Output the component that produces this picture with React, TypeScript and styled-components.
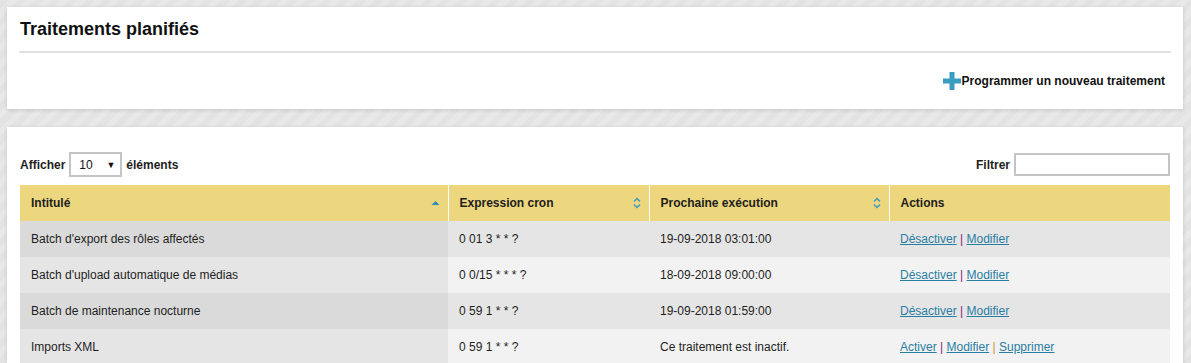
import styled, { createGlobalStyle } from "styled-components";

interface ITask {
  name: string;
  cron: string;
  next: string;
  active: boolean;
}

const tasks: ITask[] = [
  { name: "Batch d'export des rôles affectés", cron: "0 01 3 * * ?", next: "19-09-2018 03:01:00", active: true },
  { name: "Batch d'upload automatique de médias", cron: "0 0/15 * * * ?", next: "18-09-2018 09:00:00", active: true },
  { name: "Batch de maintenance nocturne", cron: "0 59 1 * * ?", next: "19-09-2018 01:59:00", active: true },
  { name: "Imports XML", cron: "0 59 1 * * ?", next: "Ce traitement est inactif.", active: false },
];

function PlusIcon() {
  return (
    <svg width="18" height="18" viewBox="0 0 18 18">
      <rect x="6.5" y="0" width="5" height="18" fill="#3b9cc2" />
      <rect x="0" y="6.5" width="18" height="5" fill="#3b9cc2" />
    </svg>
  );
}

function SortIcon({ up }: { up?: boolean }) {
  if (up) {
    return (
      <svg width="9" height="6" viewBox="0 0 9 6">
        <path d="M0.5 5 L4.5 1 L8.5 5 Z" fill="#2d8fb8" />
      </svg>
    );
  }
  return (
    <svg width="8" height="12" viewBox="0 0 8 12">
      <path d="M1 4.5 L4 1.5 L7 4.5 M1 7.5 L4 10.5 L7 7.5" stroke="#3a9bc5" strokeWidth="1.5" fill="none" />
    </svg>
  );
}

function App() {
  return (
    <>
      <GlobalStyle />
      <Page>
        <Panel>
          <Title>Traitements planifiés</Title>
          <ToolRow>
            <AddLink>
              <PlusIcon />
              Programmer un nouveau traitement
            </AddLink>
          </ToolRow>
        </Panel>
        <Panel>
          <ListBody>
            <Controls>
              <Group>
                Afficher
                <Select>
                  <span>10</span>
                  <Caret>▼</Caret>
                </Select>
                éléments
              </Group>
              <Group>
                Filtrer
                <FilterInput />
              </Group>
            </Controls>
            <Table>
              <colgroup>
                <col style={{ width: 428 }} />
                <col style={{ width: 201 }} />
                <col style={{ width: 240 }} />
                <col />
              </colgroup>
              <thead>
                <tr>
                  <Th>
                    <HeadCell>
                      Intitulé
                      <SortIcon up />
                    </HeadCell>
                  </Th>
                  <Th>
                    <HeadCell>
                      Expression cron
                      <SortIcon />
                    </HeadCell>
                  </Th>
                  <Th>
                    <HeadCell>
                      Prochaine exécution
                      <SortIcon />
                    </HeadCell>
                  </Th>
                  <Th>Actions</Th>
                </tr>
              </thead>
              <tbody>
                {tasks.map((t, i) => (
                  <Row key={t.name} odd={i % 2 === 0}>
                    <Td>{t.name}</Td>
                    <Td>{t.cron}</Td>
                    <Td>{t.next}</Td>
                    <Td>
                      {t.active ? (
                        <>
                          <ActionLink>Désactiver</ActionLink> <Pipe>|</Pipe>{" "}
                          <ActionLink>Modifier</ActionLink>
                        </>
                      ) : (
                        <>
                          <ActionLink>Activer</ActionLink> <Pipe>|</Pipe>{" "}
                          <ActionLink>Modifier</ActionLink>{" "}
                          <Pipe gold>|</Pipe>{" "}
                          <ActionLink>Supprimer</ActionLink>
                        </>
                      )}
                    </Td>
                  </Row>
                ))}
              </tbody>
            </Table>
          </ListBody>
        </Panel>
      </Page>
    </>
  );
}

const GlobalStyle = createGlobalStyle`
  html, body {
    margin: 0;
    padding: 0;
    height: 100%;
    overflow: hidden;
  }
  body {
    font-family: "Liberation Sans", Arial, sans-serif;
    font-size: 12px;
    color: #1e1e1e;
    background: repeating-linear-gradient(
      -45deg,
      #e3e3e3 0px,
      #e3e3e3 6px,
      #e8e8e8 6px,
      #e8e8e8 12px
    );
  }
`;

const Page = styled.div`
  display: flex;
  flex-direction: column;
  gap: 18px;
  padding: 7px 8px 0 7px;
`;

const Panel = styled.section`
  background: #fff;
  box-shadow: 0 1px 4px rgba(0, 0, 0, 0.14);
  padding: 0 12px;
`;

const Title = styled.h1`
  margin: 0;
  padding: 11px 0 11px 1px;
  font-size: 18px;
  line-height: 22px;
  font-weight: bold;
  color: #111;
  border-bottom: 2px solid #e0e0e0;
`;

const ToolRow = styled.div`
  height: 56px;
  display: flex;
  align-items: center;
  justify-content: flex-end;
  padding-right: 6px;
`;

const AddLink = styled.a`
  display: flex;
  align-items: center;
  gap: 1px;
  font-weight: bold;
  font-size: 12px;
  color: #111;
  cursor: pointer;
`;

const ListBody = styled.div`
  padding: 25px 1px 0 1px;
`;

const Controls = styled.div`
  display: flex;
  justify-content: space-between;
  align-items: center;
  height: 25px;
  margin-bottom: 8px;
`;

const Group = styled.div`
  display: flex;
  align-items: center;
  gap: 4px;
  font-weight: bold;
`;

const Select = styled.div`
  box-sizing: border-box;
  width: 53px;
  height: 25px;
  border: 2px solid #c4c4c4;
  display: flex;
  align-items: center;
  justify-content: space-between;
  padding: 0 5px 0 8px;
  font-weight: normal;
  color: #111;
`;

const Caret = styled.span`
  font-size: 9px;
`;

const FilterInput = styled.input`
  box-sizing: border-box;
  width: 156px;
  height: 23px;
  border: 2px solid #c4c4c4;
  outline: none;
`;

const Table = styled.table`
  width: 100%;
  border-collapse: collapse;
  table-layout: fixed;
`;

const Th = styled.th`
  height: 36px;
  padding: 0 8px 0 11px;
  background: #ecd67e;
  text-align: left;
  font-weight: bold;
  font-size: 12px;
  color: #1e1e1e;
  border-left: 1px solid #fff;
  &:first-child {
    border-left: none;
  }
`;

const HeadCell = styled.div`
  display: flex;
  align-items: center;
  justify-content: space-between;
`;

const Row = styled.tr<{ odd: boolean }>`
  height: 36px;
  background: ${(p) => (p.odd ? "#e5e5e5" : "#f2f2f2")};
  td:first-child {
    background: ${(p) => (p.odd ? "#dadada" : "#e5e5e5")};
  }
`;

const Td = styled.td`
  padding: 0 11px;
  font-size: 12px;
  color: #1e1e1e;
  white-space: nowrap;
`;

const ActionLink = styled.a`
  color: #2a7ea3;
  text-decoration: underline;
  cursor: pointer;
`;

const Pipe = styled.span<{ gold?: boolean }>`
  color: ${(p) => (p.gold ? "#c9962c" : "#8b1c7e")};
`;

export default App;
